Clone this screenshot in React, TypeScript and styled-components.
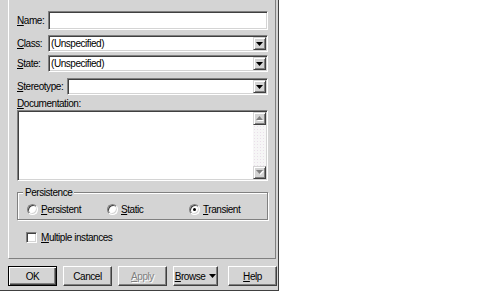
import React from 'react';
import styled, { createGlobalStyle, css } from 'styled-components';

const BG = '#d4d4d4';

const GlobalStyle = createGlobalStyle`
  html, body { margin: 0; padding: 0; background: #ffffff; }
  body {
    font-family: "Liberation Sans", Arial, sans-serif;
    font-size: 10px;
    letter-spacing: -0.45px;
    color: #000;
  }
`;

const Dialog = styled.div`
  width: 279px;
  height: 291px;
  box-sizing: border-box;
  background: ${BG};
  border-right: 1px solid #404040;
  border-bottom: 1px solid #404040;
  padding-left: 8px;
  display: flex;
  flex-direction: column;
`;

const Page = styled.div`
  width: 268px;
  height: 259px;
  box-sizing: border-box;
  border-left: 1px solid #ffffff;
  border-right: 1px solid #808080;
  border-bottom: 1px solid #808080;
  padding: 11px 7px 0 8px;
  display: flex;
  flex-direction: column;
`;

const Row = styled.div<{ $mt: number }>`
  display: flex;
  align-items: center;
  margin-top: ${(p) => p.$mt}px;
`;

const Label = styled.span<{ $w?: number }>`
  flex: none;
  ${(p) => (p.$w ? `width: ${p.$w}px;` : 'margin-right: 4px;')}
  line-height: 13px;
  white-space: nowrap;
`;

const Key = styled.span`
  text-decoration: underline;
`;

const sunken = css`
  box-sizing: border-box;
  background: #ffffff;
  border: 1px solid;
  border-color: #808080 #ffffff #ffffff #808080;
  box-shadow: inset 1px 1px #404040, inset -1px -1px ${BG};
`;

const TextInput = styled.div`
  ${sunken};
  flex: 1;
  height: 19px;
`;

const Combo = styled.div`
  ${sunken};
  flex: 1;
  height: 17px;
  padding: 1px;
  display: flex;
  align-items: stretch;
`;

const ComboText = styled.span`
  flex: 1;
  padding-left: 1px;
  line-height: 13px;
  white-space: nowrap;
`;

const raisedSmall = css`
  box-sizing: border-box;
  background: ${BG};
  border: 1px solid;
  border-color: ${BG} #404040 #404040 ${BG};
  box-shadow: inset 1px 1px #ffffff, inset -1px -1px #808080;
  display: flex;
  align-items: center;
  justify-content: center;
`;

const DropButton = styled.span`
  ${raisedSmall};
  width: 13px;
  flex: none;
`;

const ArrowDown = ({ color = '#000' }: { color?: string }) => (
  <svg width="7" height="4" viewBox="0 0 7 4" style={{ display: 'block' }}>
    <polygon points="0,0 7,0 3.5,4" fill={color} />
  </svg>
);

const DocLabel = styled.div`
  margin-top: 2px;
  line-height: 13px;
`;

const Memo = styled.div`
  ${sunken};
  height: 71px;
  padding: 1px;
  display: flex;
  justify-content: flex-end;
`;

const ScrollBar = styled.div`
  width: 13px;
  display: flex;
  flex-direction: column;
`;

const ScrollButton = styled.span`
  ${raisedSmall};
  height: 13px;
  flex: none;
`;

const ScrollTrack = styled.span`
  flex: 1;
  background-color: #f6f6f6;
  background-image: radial-gradient(#eadfea 0.6px, transparent 0.8px);
  background-size: 3px 3px;
`;

const DisabledArrow = ({ up }: { up?: boolean }) => (
  <svg width="8" height="5" viewBox="0 0 8 5" style={{ display: 'block' }}>
    {up ? (
      <>
        <polygon points="1,5 8,5 4.5,1" fill="#ffffff" />
        <polygon points="0,4 7,4 3.5,0" fill="#808080" />
      </>
    ) : (
      <>
        <polygon points="1,1 8,1 4.5,5" fill="#ffffff" />
        <polygon points="0,0 7,0 3.5,4" fill="#808080" />
      </>
    )}
  </svg>
);

const Group = styled.fieldset`
  margin: 5px 0 0 0;
  padding: 4px 0 3px 0;
  min-width: 0;
  border: 1px solid #808080;
  box-shadow: inset 1px 1px #ffffff, 1px 1px #ffffff;
`;

const Legend = styled.legend`
  margin-left: 5px;
  padding: 0 2px;
  line-height: 13px;
  background: ${BG};
`;

const RadioRow = styled.div`
  display: grid;
  grid-template-columns: 80px 82px auto;
  padding-left: 9px;
`;

const Option = styled.label`
  display: flex;
  align-items: center;
  gap: 3px;
  line-height: 13px;
  white-space: nowrap;
`;

const RadioCircle = styled.span<{ $checked?: boolean }>`
  width: 11px;
  height: 11px;
  box-sizing: border-box;
  border-radius: 50%;
  background: #ffffff;
  border: 1px solid;
  border-color: #808080 #ffffff #ffffff #808080;
  box-shadow: inset 1px 1px #404040, inset -1px -1px ${BG};
  display: flex;
  align-items: center;
  justify-content: center;
  &::after {
    content: '';
    width: 3px;
    height: 3px;
    border-radius: 50%;
    background: ${(p) => (p.$checked ? '#000' : 'transparent')};
  }
`;

const CheckRow = styled.label`
  display: flex;
  align-items: center;
  gap: 4px;
  margin: 11px 0 0 9px;
  line-height: 13px;
`;

const CheckBox = styled.span`
  width: 11px;
  height: 11px;
  box-sizing: border-box;
  background: #ffffff;
  border: 1px solid;
  border-color: #808080 #ffffff #ffffff #808080;
  box-shadow: inset 1px 1px #404040, inset -1px -1px ${BG};
`;

const ButtonBar = styled.div`
  display: flex;
  gap: 6px;
  margin-top: 7px;
  width: 269px;
`;

const Button = styled.button<{ $w: number; $default?: boolean; $push?: boolean }>`
  width: ${(p) => p.$w}px;
  height: 20px;
  padding: 0;
  margin: 0;
  ${(p) => (p.$push ? 'margin-left: auto;' : '')}
  box-sizing: border-box;
  background: ${BG};
  font: inherit;
  letter-spacing: inherit;
  color: #000;
  display: flex;
  align-items: center;
  justify-content: center;
  gap: 4px;
  ${(p) =>
    p.$default
      ? css`
          border: 1px solid #000000;
          box-shadow: inset 1px 1px #ffffff, inset -1px -1px #404040, inset -2px -2px #808080;
        `
      : css`
          border: 1px solid;
          border-color: #ffffff #404040 #404040 #ffffff;
          box-shadow: inset -1px -1px #808080;
        `}
  &:disabled {
    color: #808080;
    text-shadow: 1px 1px #ffffff;
  }
`;

export default function App() {
  return (
    <>
      <GlobalStyle />
      <Dialog>
        <Page>
          <Row $mt={0}>
            <Label $w={31}>
              <Key>N</Key>ame:
            </Label>
            <TextInput />
          </Row>
          <Row $mt={5}>
            <Label $w={31}>
              <Key>C</Key>lass:
            </Label>
            <Combo>
              <ComboText>(Unspecified)</ComboText>
              <DropButton>
                <ArrowDown />
              </DropButton>
            </Combo>
          </Row>
          <Row $mt={3}>
            <Label $w={31}>
              <Key>S</Key>tate:
            </Label>
            <Combo>
              <ComboText>(Unspecified)</ComboText>
              <DropButton>
                <ArrowDown />
              </DropButton>
            </Combo>
          </Row>
          <Row $mt={6}>
            <Label>
              <Key>S</Key>tereotype:
            </Label>
            <Combo>
              <ComboText />
              <DropButton>
                <ArrowDown />
              </DropButton>
            </Combo>
          </Row>
          <DocLabel>
            <Key>D</Key>ocumentation:
          </DocLabel>
          <Memo>
            <ScrollBar>
              <ScrollButton>
                <DisabledArrow up />
              </ScrollButton>
              <ScrollTrack />
              <ScrollButton>
                <DisabledArrow />
              </ScrollButton>
            </ScrollBar>
          </Memo>
          <Group>
            <Legend>Persistence</Legend>
            <RadioRow>
              <Option>
                <RadioCircle />
                <span>
                  <Key>P</Key>ersistent
                </span>
              </Option>
              <Option>
                <RadioCircle />
                <span>
                  <Key>S</Key>tatic
                </span>
              </Option>
              <Option>
                <RadioCircle $checked />
                <span>
                  <Key>T</Key>ransient
                </span>
              </Option>
            </RadioRow>
          </Group>
          <CheckRow>
            <CheckBox />
            <span>
              <Key>M</Key>ultiple instances
            </span>
          </CheckRow>
        </Page>
        <ButtonBar>
          <Button $w={49} $default>OK</Button>
          <Button $w={49}>Cancel</Button>
          <Button $w={49} disabled>
            <span>
              <Key>A</Key>pply
            </span>
          </Button>
          <Button $w={45}>
            <span>
              <Key>B</Key>rowse
            </span>
            <ArrowDown />
          </Button>
          <Button $w={49} $push>
            <span>
              <Key>H</Key>elp
            </span>
          </Button>
        </ButtonBar>
      </Dialog>
    </>
  );
}
